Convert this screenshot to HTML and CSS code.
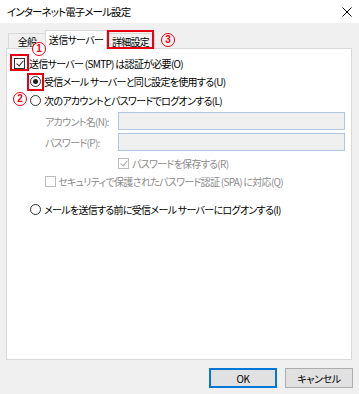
FILE: index.html
```html
<!DOCTYPE html>
<html lang="ja">
<head>
    <meta charset="UTF-8">
    <meta name="viewport" content="width=device-width, initial-scale=1.0">
    <title>インターネット電子メール設定</title>
    <link rel="stylesheet" href="styles.css">
</head>
<body>
    <div class="window">
        <div class="titlebar">
            <span class="title">インターネット電子メール設定</span>
            <svg class="close" width="10" height="10" viewBox="0 0 10 10">
                <path d="M0.5 0.5 L9.5 9.5 M9.5 0.5 L0.5 9.5" stroke="#000" stroke-width="1"/>
            </svg>
        </div>

        <div class="tabs">
            <div class="tab">全般</div>
            <div class="tab active">送信サーバー<span class="mark mark-1">1</span></div>
            <div class="tab marked">詳細設定</div>
            <span class="mark mark-3">3</span>
        </div>

        <div class="panel">
            <div class="row row-check">
                <span class="checkbox checked boxed"></span>
                <span>送信サーバー (SMTP) は認証が必要(O)</span>
            </div>
            <div class="row row-radio">
                <span class="radio checked boxed"></span>
                <span>受信メール サーバーと同じ設定を使用する(U)</span>
            </div>
            <div class="row row-radio row-tall">
                <span class="mark mark-2">2</span>
                <span class="radio"></span>
                <span>次のアカウントとパスワードでログオンする(L)</span>
            </div>

            <div class="field">
                <span class="field-label">アカウント名(N):</span>
                <span class="input"></span>
            </div>
            <div class="field">
                <span class="field-label">パスワード(P):</span>
                <span class="input"></span>
            </div>

            <div class="row row-save disabled">
                <span class="checkbox checked"></span>
                <span>パスワードを保存する(R)</span>
            </div>
            <div class="row row-spa disabled">
                <span class="checkbox"></span>
                <span>セキュリティで保護されたパスワード認証 (SPA) に対応(Q)</span>
            </div>

            <div class="row row-radio row-gap">
                <span class="radio"></span>
                <span>メールを送信する前に受信メール サーバーにログオンする(I)</span>
            </div>
        </div>

        <div class="buttons">
            <button class="btn default">OK</button>
            <button class="btn">キャンセル</button>
        </div>
    </div>
</body>
</html>
```

FILE: styles.css
```css
body {
    margin: 0;
    background: #f0f0f0;
    font-family: 'Noto Sans CJK JP', 'Noto Sans', sans-serif;
    font-size: 10px;
    letter-spacing: -0.7px;
    font-feature-settings: "palt";
    white-space: nowrap;
    color: #000;
}

.window {
    width: 359px;
    height: 394px;
    background: #f0f0f0;
}

.titlebar {
    height: 23px;
    background: #fff;
    display: flex;
    align-items: center;
    justify-content: space-between;
    padding: 0 7px 0 7px;
}

.title {
    font-size: 10.5px;
    letter-spacing: -0.9px;
}

.tabs {
    display: flex;
    align-items: flex-end;
    height: 25px;
    padding-left: 8px;
    position: relative;
}

.tab {
    height: 15px;
    display: flex;
    align-items: center;
    justify-content: center;
    border: 1px solid #d9d9d9;
    border-bottom: none;
    box-sizing: border-box;
    background: #f0f0f0;
    position: relative;
}

.tab:first-child {
    width: 37px;
    border-right: none;
}

.tab.active {
    width: 62px;
    height: 19px;
    background: #fff;
    margin-bottom: -1px;
    z-index: 1;
    padding-bottom: 2px;
}

.tab.marked {
    width: 48px;
    border-left: none;
}

.tab.marked::after {
    content: "";
    position: absolute;
    left: 0;
    right: 0;
    top: -4px;
    bottom: -1px;
    border: 2px solid #e60012;
}

/* red circled numbers */
.mark {
    position: absolute;
    width: 12px;
    height: 12px;
    border: 1.5px solid #e60012;
    border-radius: 50%;
    color: #e60012;
    font-family: 'Liberation Sans', sans-serif;
    font-weight: bold;
    font-size: 10px;
    letter-spacing: 0;
    line-height: 12px;
    text-align: center;
    z-index: 3;
}

.mark-1 {
    left: -14px;
    top: 11px;
    background: #fff;
}

.mark-3 {
    left: 161px;
    top: 10px;
}

.mark-2 {
    left: 6px;
    top: 2px;
}

.panel {
    margin: 0 7px 0 6px;
    height: 312px;
    box-sizing: border-box;
    border: 1px solid #d9d9d9;
    background: #fff;
    padding-top: 5px;
}

.row {
    display: flex;
    align-items: center;
    height: 18px;
    position: relative;
}

.row-check {
    padding-left: 7px;
    gap: 4px;
}

.row-radio {
    padding-left: 23px;
    gap: 3px;
}

.row-tall {
    height: 20px;
}

.row-gap {
    margin-top: 10px;
}

.row-save {
    padding-left: 111px;
    gap: 3px;
    margin-top: 1px;
}

.row-spa {
    padding-left: 38px;
    gap: 2px;
}

.disabled {
    color: #8a8a8a;
}

.checkbox {
    width: 11px;
    height: 11px;
    box-sizing: border-box;
    border: 1px solid #333;
    background: #fff;
    position: relative;
    flex: none;
}

.checkbox.checked::before {
    content: "";
    position: absolute;
    left: 3px;
    top: 0px;
    width: 3px;
    height: 6px;
    border: solid #333;
    border-width: 0 1px 1px 0;
    transform: rotate(40deg);
}

.disabled .checkbox {
    border-color: #bcbcbc;
}

.disabled .checkbox.checked::before {
    border-color: #a8a8a8;
}

.radio {
    width: 11px;
    height: 11px;
    box-sizing: border-box;
    border: 1px solid #333;
    border-radius: 50%;
    background: #fff;
    position: relative;
    flex: none;
}

.radio.checked::before {
    content: "";
    position: absolute;
    left: 2px;
    top: 2px;
    width: 5px;
    height: 5px;
    border-radius: 50%;
    background: #222;
}

.checkbox.boxed::after {
    content: "";
    position: absolute;
    left: -5px;
    top: -5px;
    right: -5px;
    bottom: -3px;
    border: 2px solid #e60012;
}

.radio.boxed::after {
    content: "";
    position: absolute;
    left: -4px;
    top: -4px;
    right: -4px;
    bottom: -5px;
    border: 2px solid #e60012;
    border-radius: 0;
}

.field {
    display: flex;
    align-items: center;
    height: 18px;
    padding-left: 38px;
    margin-top: 2px;
    margin-bottom: 3px;
    color: #8a8a8a;
}

.field + .field {
    margin-top: 0;
}

.field-label {
    width: 73px;
}

.input {
    width: 227px;
    height: 18px;
    box-sizing: border-box;
    border: 1px solid #b3c6de;
    background: #f0f0f0;
}

.buttons {
    display: flex;
    justify-content: flex-end;
    gap: 8px;
    padding: 8px 6px 0 0;
}

.btn {
    width: 68px;
    height: 20px;
    box-sizing: border-box;
    border: 1px solid #adadad;
    background: #e1e1e1;
    font-family: 'Noto Sans CJK JP', 'Noto Sans', sans-serif;
    font-feature-settings: "palt";
    font-size: 10px;
    letter-spacing: -0.4px;
    padding: 0;
    color: #000;
}

.btn.default {
    border: 2px solid #0078d7;
}
```
